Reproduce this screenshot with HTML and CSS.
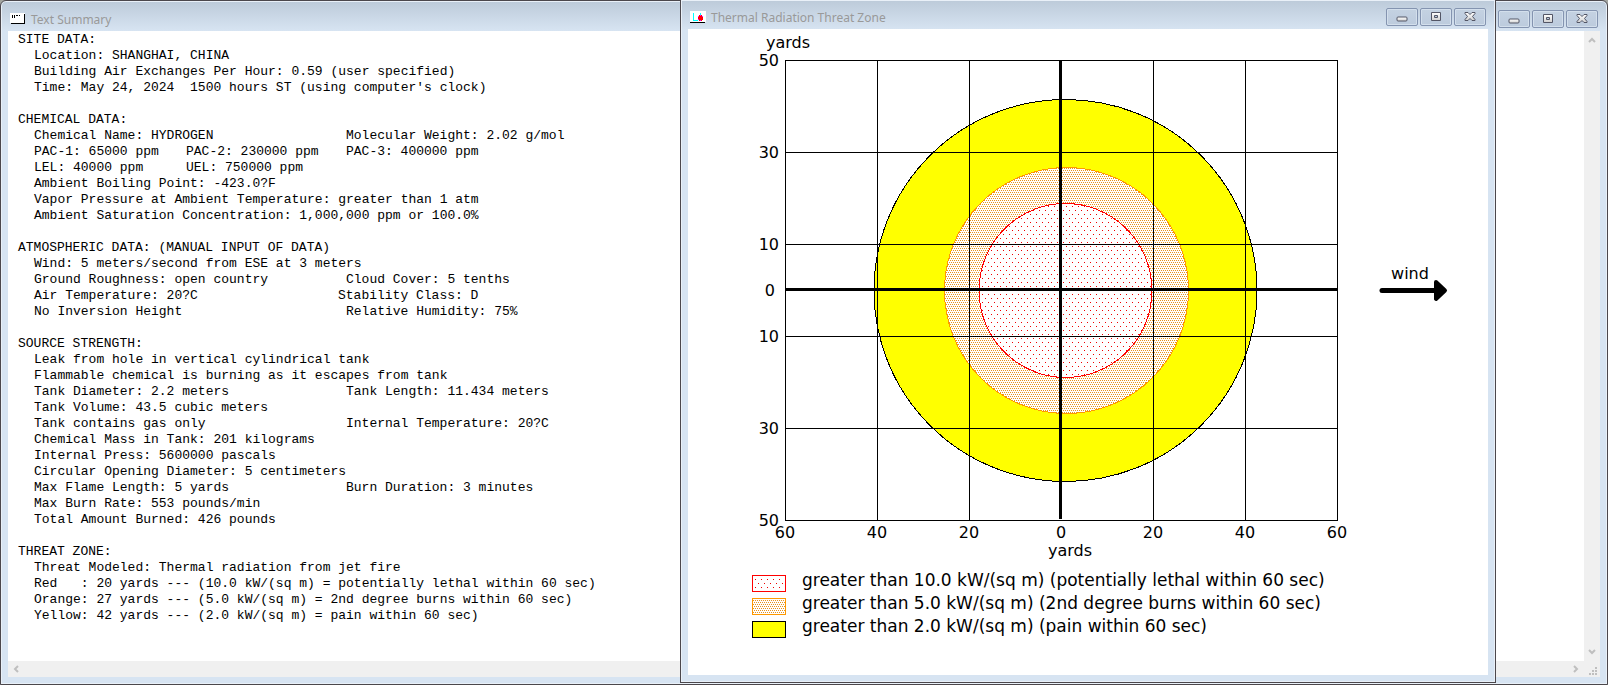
FILE: index.html
```
<!DOCTYPE html>
<html lang="en">
<head>
  <meta charset="UTF-8" />
  <title>Thermal Radiation Threat Zone</title>
  <link rel="stylesheet" href="styles.css">
</head>
<body>
  <!-- shared symbols and fill patterns -->
  <svg class="defs" aria-hidden="true">
    <defs>
      <pattern id="dots-red" width="6" height="8" patternUnits="userSpaceOnUse">
        <rect width="6" height="8" fill="#fff"/>
        <rect width="1" height="1" fill="#e00"/>
        <rect x="3" y="4" width="1" height="1" fill="#e00"/>
      </pattern>
      <pattern id="dots-orange" width="2" height="4" patternUnits="userSpaceOnUse">
        <rect width="2" height="4" fill="#fff"/>
        <rect width="1" height="1" fill="#e8941c"/>
        <rect x="1" y="2" width="1" height="1" fill="#e8941c"/>
      </pattern>
      <linearGradient id="metal" x1="0" y1="0" x2="0" y2="1">
        <stop offset="0" stop-color="#fff"/>
        <stop offset="1" stop-color="#d0d0d0"/>
      </linearGradient>
      <symbol id="min" viewBox="0 0 12 10">
        <rect x="1" y="5" width="10" height="4" rx="1" fill="url(#metal)" stroke="#535666"/>
      </symbol>
      <symbol id="max" viewBox="0 0 12 10">
        <path d="M1.5.5h9v8h-9z" fill="url(#metal)" stroke="#535666"/>
        <path d="M4.5 3.5h3v2h-3z" fill="#b8c8dc" stroke="#535666"/>
      </symbol>
      <symbol id="close" viewBox="0 0 12 10">
        <path d="M1 .5h3l2 2 2-2h3v1L8.500 4.500 11 7.500v1H8l-2-2-2 2H1v-1l2.500-3L1 1.500z" fill="url(#metal)" stroke="#535666"/>
      </symbol>
      <symbol id="arrow" viewBox="0 0 8 6">
        <path d="M1 5l3-3 3 3" fill="none" stroke="#bfbfbf" stroke-width="2"/>
      </symbol>
    </defs>
  </svg>

  <main class="window summary">
    <header class="titlebar">
      <svg class="app-icon" width="16" height="12" viewBox="0 0 16 12" shape-rendering="crispEdges">
        <path d="M0 0h15v10H0z" fill="#fff"/>
        <path d="M15 1v10H1v-1h13V1z" fill="#000"/>
        <path d="M2 2h1v3H2zM4 2h1v3H4zM6 2h2v1H6zM9 2h1v1H9z" fill="#000"/>
      </svg>
      <h1>Text Summary</h1>
      <div class="controls">
        <button type="button" aria-label="Minimize"><svg width="12" height="10"><use href="#min"/></svg></button>
        <button type="button" aria-label="Maximize"><svg width="12" height="10"><use href="#max"/></svg></button>
        <button type="button" aria-label="Close"><svg width="12" height="10"><use href="#close"/></svg></button>
      </div>
    </header>
    <div class="scroll-area">
      <div class="report">
        <section>
          <h2>SITE DATA:</h2>
<pre>Location: SHANGHAI, CHINA
Building Air Exchanges Per Hour: 0.59 (user specified)
Time: May 24, 2024  1500 hours ST (using computer's clock)</pre>
        </section>
        <section>
          <h2>CHEMICAL DATA:</h2>
<pre><span class="col">Chemical Name: HYDROGEN</span>Molecular Weight: 2.02 g/mol
<span class="half">PAC-1: 65000 ppm</span><span class="half wide">PAC-2: 230000 ppm</span>PAC-3: 400000 ppm
<span class="half">LEL: 40000 ppm</span>UEL: 750000 ppm
Ambient Boiling Point: -423.0?F
Vapor Pressure at Ambient Temperature: greater than 1 atm
Ambient Saturation Concentration: 1,000,000 ppm or 100.0%</pre>
        </section>
        <section>
          <h2>ATMOSPHERIC DATA: (MANUAL INPUT OF DATA)</h2>
<pre>Wind: 5 meters/second from ESE at 3 meters
<span class="col">Ground Roughness: open country</span>Cloud Cover: 5 tenths
<span class="col short">Air Temperature: 20?C</span>Stability Class: D
<span class="col">No Inversion Height</span>Relative Humidity: 75%</pre>
        </section>
        <section>
          <h2>SOURCE STRENGTH:</h2>
<pre>Leak from hole in vertical cylindrical tank
Flammable chemical is burning as it escapes from tank
<span class="col">Tank Diameter: 2.2 meters</span>Tank Length: 11.434 meters
Tank Volume: 43.5 cubic meters
<span class="col">Tank contains gas only</span>Internal Temperature: 20?C
Chemical Mass in Tank: 201 kilograms
Internal Press: 5600000 pascals
Circular Opening Diameter: 5 centimeters
<span class="col">Max Flame Length: 5 yards</span>Burn Duration: 3 minutes
Max Burn Rate: 553 pounds/min
Total Amount Burned: 426 pounds</pre>
        </section>
        <section>
          <h2>THREAT ZONE:</h2>
<pre>Threat Modeled: Thermal radiation from jet fire
Red   : 20 yards --- (10.0 kW/(sq m) = potentially lethal within 60 sec)
Orange: 27 yards --- (5.0 kW/(sq m) = 2nd degree burns within 60 sec)
Yellow: 42 yards --- (2.0 kW/(sq m) = pain within 60 sec)</pre>
        </section>
      </div>
      <div class="scrollbar vertical">
        <button type="button" aria-label="Scroll up"><svg width="8" height="6"><use href="#arrow"/></svg></button>
        <button type="button" class="down" aria-label="Scroll down"><svg width="8" height="6"><use href="#arrow"/></svg></button>
      </div>
      <div class="scrollbar horizontal">
        <button type="button" class="left" aria-label="Scroll left"><svg width="8" height="6"><use href="#arrow"/></svg></button>
        <button type="button" class="right" aria-label="Scroll right"><svg width="8" height="6"><use href="#arrow"/></svg></button>
      </div>
      <div class="grip">
        <svg width="16" height="16" viewBox="0 0 16 16" fill="#bfbfbf" shape-rendering="crispEdges">
          <path d="M11 6h2v2h-2zM8 9h2v2H8zM11 9h2v2h-2zM5 12h2v2H5zM8 12h2v2H8zM11 12h2v2h-2z"/>
        </svg>
      </div>
    </div>
  </main>

  <section class="window zone">
    <header class="titlebar">
      <svg class="app-icon" width="16" height="12" viewBox="0 0 16 12" shape-rendering="crispEdges">
        <path d="M0 0h16v11H0z" fill="#fff"/>
        <path d="M0 11h15v1H0z" fill="#000"/>
        <path d="M3 2h1v7h4v1H3zM10 2h1v2h-1z" fill="#0ff"/>
        <path d="M9 4h3v1h1v4h-1v1H9V9H8V5h1z" fill="#f00"/>
        <path d="M10 4h1v1h-1zM8 5h1v1H8zM12 5h1v1h-1zM8 8h1v1H8zM10 9h1v1h-1z" fill="#f0f"/>
      </svg>
      <h1>Thermal Radiation Threat Zone</h1>
      <div class="controls">
        <button type="button" aria-label="Minimize"><svg width="12" height="10"><use href="#min"/></svg></button>
        <button type="button" aria-label="Maximize"><svg width="12" height="10"><use href="#max"/></svg></button>
        <button type="button" aria-label="Close"><svg width="12" height="10"><use href="#close"/></svg></button>
      </div>
    </header>
    <div class="plot">
      <svg class="chart" viewBox="0 0 800 540" role="img" aria-label="Thermal radiation threat zone in yards">
        <g transform="translate(177 61)" shape-rendering="crispEdges">
          <ellipse cx="200.5" cy="200.5" rx="191.5" ry="191" fill="#ff0" stroke="#000"/>
          <ellipse cx="201.5" cy="200.5" rx="122" ry="123" fill="url(#dots-orange)" stroke="#f90"/>
          <ellipse cx="200.5" cy="200.5" rx="86.5" ry="87" fill="url(#dots-red)" stroke="#f00"/>
        </g>
        <g fill="none" stroke="#000" shape-rendering="crispEdges">
          <path d="M97.500 31.500h552v460h-552z"/>
          <path d="M189.500 31v460M281.500 31v460M465.500 31v460M557.500 31v460"/>
          <path d="M97 123.500h552M97 215.500h552M97 307.500h552M97 399.500h552"/>
          <path d="M372.500 31v459M97 260.500h552" stroke-width="3"/>
        </g>
        <g class="y-labels">
          <text x="91" y="37">50</text>
          <text x="91" y="129">30</text>
          <text x="91" y="221">10</text>
          <text x="87" y="267">0</text>
          <text x="91" y="313">10</text>
          <text x="91" y="405">30</text>
          <text x="91" y="497">50</text>
        </g>
        <g class="x-labels">
          <text x="97" y="509">60</text>
          <text x="189" y="509">40</text>
          <text x="281" y="509">20</text>
          <text x="373" y="509">0</text>
          <text x="465" y="509">20</text>
          <text x="557" y="509">40</text>
          <text x="649" y="509">60</text>
          <text x="382" y="527">yards</text>
          <text x="100" y="19">yards</text>
          <text x="722" y="250">wind</text>
        </g>
        <path d="M694 261.500h52" stroke="#000" stroke-width="5" stroke-linecap="round"/>
        <path d="M748 253l9 8.500-9 8.500z" stroke="#000" stroke-width="4" stroke-linejoin="round"/>
      </svg>
      <ul class="legend">
        <li><svg width="34" height="17" shape-rendering="crispEdges"><rect x=".5" y=".5" width="33" height="16" fill="url(#dots-red)" stroke="#f00"/></svg>greater than 10.0 kW/(sq m) (potentially lethal within 60 sec)</li>
        <li><svg width="34" height="17" shape-rendering="crispEdges"><rect x=".5" y=".5" width="33" height="16" fill="url(#dots-orange)" stroke="#f90"/></svg>greater than 5.0 kW/(sq m) (2nd degree burns within 60 sec)</li>
        <li><svg width="34" height="17" shape-rendering="crispEdges"><rect x=".5" y=".5" width="33" height="16" fill="#ff0" stroke="#000"/></svg>greater than 2.0 kW/(sq m) (pain within 60 sec)</li>
      </ul>
    </div>
  </section>
</body>
</html>
```

FILE: styles.css
```
* {box-sizing:border-box}
body {margin:0; min-height:100vh; display:flex; position:relative; background:#a3a5a0}
h1, h2, pre, ul {margin:0; padding:0; font-weight:normal}
svg  {display:block}
.defs {position:absolute; width:0; height:0}

.window {
  display:flex;
  flex-direction:column;
  padding:0 7px 7px;
  border:1px solid #4b474c;
  background:#d7e4f2 linear-gradient(#bccad9, #d7e4f2) no-repeat 0 0 / 100% 30px;
  box-shadow:inset 0 0 0 1px #e9f0f8;
}
.summary {flex:1; border-radius:6px 6px 0 0}
/* floats over the summary window */
.zone {
  position:absolute;
  top:0;
  right:112px;
  bottom:2px;
  left:680px;
  border-top:0;
}

.titlebar {display:flex; align-items:center; gap:5px; height:30px; padding:6px 2px 0; flex:none}
.zone .titlebar {height:29px; padding-top:4px}
.titlebar h1 {flex:1; padding-top:2px; font:12px/18px "Noto Sans", sans-serif; color:#999}
.controls {display:flex; gap:2px}
.controls button {
  display:flex;
  align-items:center;
  justify-content:center;
  width:32px;
  height:18px;
  padding:0;
  border:1px solid #8494b0;
  border-radius:2px;
  background:linear-gradient(#c4d2e2, #bccbdd);
  box-shadow:inset 0 0 0 1px #d3dfec;
}

.scroll-area {
  flex:1;
  display:grid;
  grid-template-columns:1fr 16px;
  grid-template-rows:1fr 16px;
  background:#fff;
}
.report {padding:1px 10px 0; color:#000}
.report section {margin-bottom:16px}
.report h2, .report pre {font:13px/16px "Liberation Mono", monospace}
.report pre {padding-left:16px}
.col  {display:inline-block; width:312px}
.col.short {width:304px}
.half {display:inline-block; width:152px}
.half.wide {width:160px}

.scrollbar {display:flex; justify-content:space-between; background:#f0f0f0}
.vertical {flex-direction:column}
.scrollbar button {
  display:flex;
  align-items:center;
  justify-content:center;
  width:16px;
  height:18px;
  padding:0;
  border:0;
  background:none;
}
.horizontal button {height:16px}
.down svg  {transform:rotate(180deg)}
.left svg  {transform:rotate(-90deg)}
.right svg {transform:rotate(90deg)}
.grip {background:#f0f0f0}

.plot {flex:1; background:#fff; font:16px/23px "DejaVu Sans", Verdana, sans-serif}
.chart {width:100%; max-width:800px}
.chart text {fill:#000}
.y-labels {text-anchor:end}
.x-labels {text-anchor:middle}
.legend {list-style:none; padding-left:64px; font-size:17px}
.legend li {display:flex; align-items:flex-end; gap:16px}
```
